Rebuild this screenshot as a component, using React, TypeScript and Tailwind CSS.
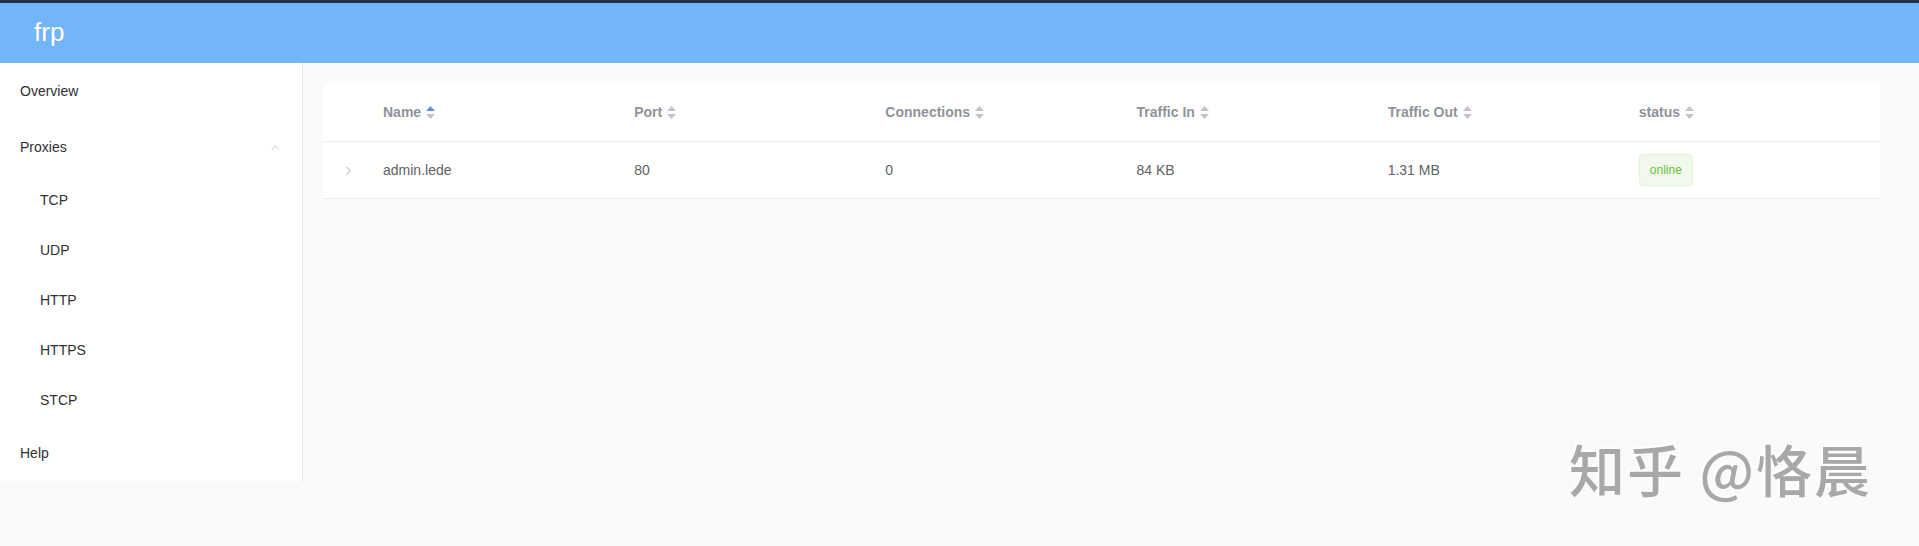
import { ChevronRight, ChevronUp } from "lucide-react"

const columns = ["Name", "Port", "Connections", "Traffic In", "Traffic Out", "status"]

const rows = [
    { name: "admin.lede", port: "80", conns: "0", trafficIn: "84 KB", trafficOut: "1.31 MB", status: "online" },
]

function SortCaret({ active }: { active?: boolean }) {
    return (
        <span className="ml-[5px] inline-flex flex-col items-center gap-[3px]">
            <svg width="9" height="5" viewBox="0 0 9 5">
                <path d="M4.5 0 L9 5 L0 5 Z" fill={active ? "#5f95dc" : "#c0c4cc"} />
            </svg>
            <svg width="9" height="5" viewBox="0 0 9 5">
                <path d="M0 0 L9 0 L4.5 5 Z" fill="#c0c4cc" />
            </svg>
        </span>
    )
}

export default function App() {
    const subItems = ["TCP", "UDP", "HTTP", "HTTPS", "STCP"]

    return (
        <div className="relative h-[546px] w-full overflow-hidden bg-[#fafafa] font-['Liberation_Sans',Arial,sans-serif]">
            {/* top strip */}
            <div className="h-[3px] bg-[#243044]" />

            {/* header */}
            <header className="flex h-[60px] items-center bg-[#72b5f8] pl-[34px]">
                <span className="-mt-[2px] text-[26px] text-white">frp</span>
            </header>

            <div className="flex">
                {/* Sidebar */}
                <aside className="w-[303px] shrink-0 border-r border-[#e6e6e6] bg-white text-[14px] text-[#303133]">
                    <div className="flex h-[56px] items-center pl-[20px]">Overview</div>
                    <div className="flex h-[56px] items-center justify-between pl-[20px] pr-[20px]">
                        <span>Proxies</span>
                        <ChevronUp className="h-[13px] w-[13px] text-[#b4b8bf]" strokeWidth={1.5} />
                    </div>
                    {subItems.map((item) => (
                        <div key={item} className="flex h-[50px] items-center pl-[40px]">
                            {item}
                        </div>
                    ))}
                    <div className="flex h-[56px] items-center pl-[20px]">Help</div>
                </aside>

                {/* Main */}
                <main className="flex-1 pl-[20px] pr-[39px] pt-[20px]">
                    <div className="bg-white text-[14px]">
                        <div className="grid h-[59px] grid-cols-[50px_repeat(6,1fr)] items-center border-b border-[#ebeef5]">
                            <div />
                            {columns.map((col, i) => (
                                <div key={col} className="flex items-center pl-[10px] font-bold text-[#909399]">
                                    {col}
                                    <SortCaret active={i === 0} />
                                </div>
                            ))}
                        </div>

                        {rows.map((row) => (
                            <div
                                key={row.name}
                                className="grid h-[57px] grid-cols-[50px_repeat(6,1fr)] items-center border-b border-[#ebeef5] text-[#606266]"
                            >
                                <div className="flex justify-center">
                                    <ChevronRight className="h-[13px] w-[13px] text-[#8a8e96]" strokeWidth={1.5} />
                                </div>
                                <div className="pl-[10px]">{row.name}</div>
                                <div className="pl-[10px]">{row.port}</div>
                                <div className="pl-[10px]">{row.conns}</div>
                                <div className="pl-[10px]">{row.trafficIn}</div>
                                <div className="pl-[10px]">{row.trafficOut}</div>
                                <div className="pl-[10px]">
                                    <span className="inline-flex h-[32px] items-center rounded-[4px] border border-[#e1f3d8] bg-[#f0f9eb] px-[10px] text-[12px] text-[#67c23a]">
                                        {row.status}
                                    </span>
                                </div>
                            </div>
                        ))}
                    </div>
                </main>
            </div>

            {/* watermark */}
            <div className="absolute left-[1569px] top-[430px] whitespace-nowrap font-['Noto_Sans_CJK_SC',sans-serif] text-[56px] font-medium leading-[76px] tracking-[2px] text-[#a8a8a8] [text-shadow:-2px_-2px_0_#ffffff]">
                知乎 @恪晨
            </div>
        </div>
    )
}
